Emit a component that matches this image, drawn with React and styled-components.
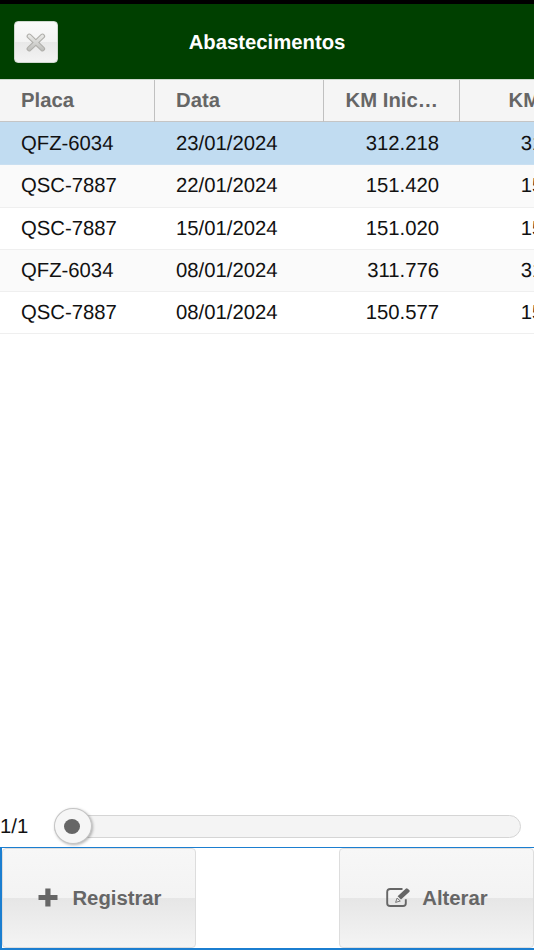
import React from "react";
import styled, { createGlobalStyle } from "styled-components";

const Global = createGlobalStyle`
  * { box-sizing: border-box; }
  html, body { margin: 0; padding: 0; overflow: hidden; background: #fff; }
  button { font: inherit; letter-spacing: inherit; padding: 0; margin: 0; }
`;

const Page = styled.main`
  width: 534px;
  height: 950px;
  display: flex;
  flex-direction: column;
  overflow: hidden;
  background: #fff;
  color: #111;
  font-family: "Liberation Sans", Arial, sans-serif;
  font-size: 20.3px;
  text-rendering: geometricPrecision;
`;

const TitleBar = styled.header`
  flex: none;
  height: 79px;
  border-top: 4px solid #000;
  background: #004000;
  display: grid;
  grid-template-columns: 58px 1fr 58px;
  align-items: center;
`;

const CloseButton = styled.button`
  width: 44px;
  height: 42px;
  margin-left: 14px;
  margin-bottom: -1px;
  display: grid;
  place-items: center;
  border: 1px solid #d0d8d0;
  border-radius: 4px;
  background: linear-gradient(#fafafa, #f3f3f3 50%, #e8e8e8 50%, #f3f3f3);
`;

const Title = styled.h1`
  margin: 0;
  padding-top: 2px;
  text-align: center;
  color: #fff;
  font-size: inherit;
  line-height: 24px;
`;

const Grid = styled.section`
  flex: 1;
  min-height: 0;
  overflow: hidden;
`;

const GridRow = styled.div`
  width: 615px;
  height: ${(p) => (p.$selected ? 43.25 : 42.25)}px;
  display: grid;
  grid-template-columns: 155px 169px 136px 155px;
  border-bottom: 1px solid ${(p) => (p.$selected ? "#c9dff1" : "#efefef")};
  background: ${(p) => (p.$selected ? "#c1dcf1" : p.$striped ? "#fafafa" : "#fff")};
`;

const HeaderRow = styled(GridRow)`
  height: 43px;
  background: #f5f5f5;
  border-bottom: 1px solid #c5c5c5;
  border-top: 1px solid #ced8ce;
  color: #666;
  font-weight: bold;
`;

const Cell = styled.div`
  padding: 0 21px;
  line-height: ${(p) => (p.$selected ? 44 : 42.5)}px;
  white-space: nowrap;
  text-align: ${(p) => (p.$numeric ? "right" : "left")};
`;

const HeaderCell = styled(Cell)`
  line-height: 42px;
  border-right: 1px solid #c0c0c0;
`;

const Pager = styled.div`
  flex: none;
  height: 42px;
  display: grid;
  grid-template-columns: 53px 1fr;
  align-items: center;
  padding: 0 13px 0 0;
`;

const PageCount = styled.span`
  padding-top: 2px;
`;

const Track = styled.div`
  height: 23px;
  display: flex;
  align-items: center;
  margin-left: 1px;
  border: 1px solid #d5d5d5;
  border-radius: 12px;
  background: #f4f4f4;
`;

const Thumb = styled.div`
  width: 38px;
  height: 36px;
  margin-left: -1px;
  flex: none;
  display: grid;
  place-items: center;
  border: 1px solid #c5c5c5;
  border-radius: 50%;
  background: #f6f6f6;
  box-shadow: 1px 1px 3px rgba(0, 0, 0, 0.3);
`;

const Dot = styled.span`
  width: 16px;
  height: 15px;
  margin-right: 2px;
  border-radius: 50%;
  background: #666;
`;

const Toolbar = styled.footer`
  flex: none;
  height: 103px;
  display: flex;
  justify-content: space-between;
  border: solid #1b7ed0;
  border-width: 1px 0 2px 2px;
`;

const ActionButton = styled.button`
  width: ${(p) => p.$width}px;
  height: 100px;
  display: flex;
  align-items: center;
  justify-content: center;
  gap: ${(p) => p.$gap}px;
  padding: 0 0 2px ${(p) => p.$inset}px;
  border: 1px solid #ddd;
  border-radius: 4px;
  background: linear-gradient(#f7f7f7, #f3f3f3 50%, #e6e6e6 50%, #f4f4f4);
  color: #666;
  font-weight: bold;
`;

const ActionLabel = styled.span`
  padding-top: 2px;
`;

const COLUMNS = [
  { label: "Placa" },
  { label: "Data" },
  { label: "KM Inic…", numeric: true },
  { label: "KM Final", numeric: true },
];

const ROWS = [
  ["QFZ-6034", "23/01/2024", "312.218", "312.718"],
  ["QSC-7887", "22/01/2024", "151.420", "151.820"],
  ["QSC-7887", "15/01/2024", "151.020", "151.420"],
  ["QFZ-6034", "08/01/2024", "311.776", "312.218"],
  ["QSC-7887", "08/01/2024", "150.577", "151.020"],
];

const CloseIcon = () => (
  <svg width="20" height="19" viewBox="0 0 20 19" fill="none" strokeLinecap="round">
    <defs>
      <linearGradient id="closeFill" x1="0" y1="0" x2="0" y2="19" gradientUnits="userSpaceOnUse">
        <stop offset="0" stopColor="#f0f0ee" />
        <stop offset="1" stopColor="#b9b9b6" />
      </linearGradient>
    </defs>
    <path d="M3.2 3.2L16.5 15.8M16.5 3.2L3.2 15.8" stroke="#b0afab" strokeWidth="5.2" />
    <path d="M3.2 3.2L16.5 15.8M16.5 3.2L3.2 15.8" stroke="url(#closeFill)" strokeWidth="3" />
  </svg>
);

const PlusIcon = () => (
  <svg width="20" height="19" viewBox="0 0 20 19">
    <path d="M7.3 0.5h5.2v6.5H19.5v5h-7v6.5H7.3V12H0.5V7h6.8z" fill="#666" />
  </svg>
);

const EditIcon = () => (
  <svg width="24" height="21" viewBox="0 0 24 21" fill="none">
    <path d="M16.5 2H4.2Q1.2 2 1.2 5v11.2Q1.2 19 4.2 19h12.8Q19.8 19 19.8 16.2V12.3" stroke="#666" strokeWidth="1.9" />
    <path d="M9.6 15.4l1.5-4.3 3.2 2.9z" stroke="#777" strokeWidth="1" />
    <path d="M11.6 9.3L19.7 1.7Q20.7.8 21.7 1.7l1.5 1.4q1 1 0 1.9l-8.2 7.6z" fill="#666" />
  </svg>
);

export default function App() {
  return (
    <Page>
      <Global />
      <TitleBar>
        <CloseButton aria-label="Fechar"><CloseIcon /></CloseButton>
        <Title>Abastecimentos</Title>
      </TitleBar>
      <Grid>
        <HeaderRow>
          {COLUMNS.map((c) => (
            <HeaderCell key={c.label} $numeric={c.numeric}>{c.label}</HeaderCell>
          ))}
        </HeaderRow>
        {ROWS.map((row, r) => (
          <GridRow key={r} $selected={r === 0} $striped={r % 2 === 1}>
            {row.map((value, c) => (
              <Cell key={c} $selected={r === 0} $numeric={COLUMNS[c].numeric}>{value}</Cell>
            ))}
          </GridRow>
        ))}
      </Grid>
      <Pager>
        <PageCount>1/1</PageCount>
        <Track><Thumb><Dot /></Thumb></Track>
      </Pager>
      <Toolbar>
        <ActionButton $width={194} $gap={14} $inset={2}><PlusIcon /><ActionLabel>Registrar</ActionLabel></ActionButton>
        <ActionButton $width={195} $gap={12} $inset={1}><EditIcon /><ActionLabel>Alterar</ActionLabel></ActionButton>
      </Toolbar>
    </Page>
  );
}
